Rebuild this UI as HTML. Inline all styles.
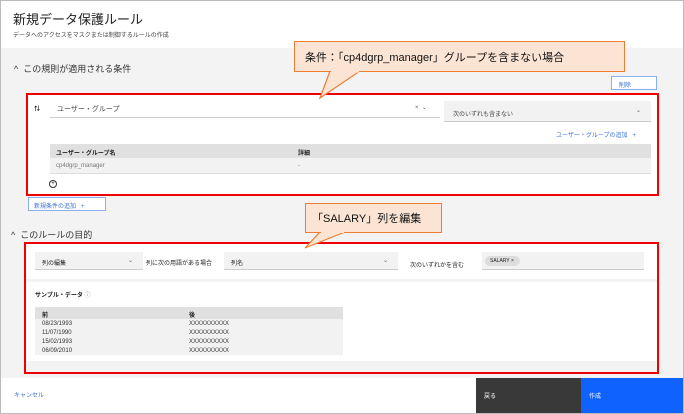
<!DOCTYPE html>
<html><head><meta charset="utf-8"><style>
*{box-sizing:border-box;margin:0;padding:0}
body{width:684px;height:414px;overflow:hidden;font-family:"Liberation Sans","Noto Sans CJK JP",sans-serif;background:#fff;position:relative;color:#222}
.a{position:absolute}
.s{font-size:6px;color:#333}
</style></head><body>
<div class="a" style="left:0;top:0;width:684px;height:414px;border:1px solid #bbb;background:#f3f3f3"></div>
<div class="a" style="left:1px;top:1px;width:682px;height:47px;background:#fff"></div>
<div class="a" style="left:13px;top:9px;font-size:13px;color:#222">新規データ保護ルール</div>
<div class="a" style="left:13px;top:30px;font-size:6px;color:#444">データへのアクセスをマスクまたは制御するルールの作成</div>
<div class="a" style="left:14px;top:62px;font-size:9px;color:#333">^&nbsp;&nbsp;この規則が適用される条件</div>
<div class="a" style="left:611px;top:76px;width:46px;height:14px;border:1px solid #8ab0f0;background:#fff;font-size:6px;color:#3b6fd8;padding:3px 0 0 7px">削除</div>
<!-- box1 -->
<div class="a" style="left:26px;top:93px;width:633px;height:103px;border:2px solid #e00;background:#fff"></div>
<div class="a" style="left:34px;top:104px;font-size:6px;font-weight:bold">⇅</div>
<div class="a" style="left:57px;top:104px;font-size:7px;color:#444">ユーザー・グループ</div>
<div class="a" style="left:50px;top:117px;width:390px;height:1px;background:#ccc"></div>
<div class="a" style="left:415px;top:104px;font-size:6px;color:#666">×&nbsp;&nbsp;⌄</div>
<div class="a" style="left:444px;top:101px;width:207px;height:21px;background:#f2f2f2;border-bottom:1px solid #ccc"></div>
<div class="a" style="left:453px;top:109px;font-size:6px;color:#444">次のいずれも含まない</div>
<div class="a" style="left:636px;top:107px;font-size:6px;color:#666">⌄</div>
<div class="a" style="left:556px;top:130px;font-size:6px;color:#3b6fd8">ユーザー・グループの追加&nbsp;&nbsp;&nbsp;+</div>
<div class="a" style="left:50px;top:144px;width:601px;height:14px;background:#e0e0e0"></div>
<div class="a" style="left:56px;top:148px;font-size:6px;font-weight:bold">ユーザー・グループ名</div>
<div class="a" style="left:298px;top:148px;font-size:6px;font-weight:bold">詳細</div>
<div class="a" style="left:50px;top:158px;width:601px;height:16px;background:#f2f2f2;border-bottom:1px solid #ddd"></div>
<div class="a" style="left:56px;top:163px;font-size:6px;color:#777">cp4dgrp_manager</div>
<div class="a" style="left:298px;top:163px;font-size:6px;color:#777">-</div>
<div class="a" style="left:49px;top:180px;width:8px;height:8px;border:1px solid #333;border-radius:50%;font-size:6px;line-height:6px;text-align:center">+</div>
<div class="a" style="left:28px;top:197px;width:78px;height:14px;border:1px solid #8ab0f0;background:#fff;font-size:6px;color:#3b6fd8;padding:3px 0 0 5px">新規条件の追加&nbsp;&nbsp;&nbsp;+</div>
<div class="a" style="left:11px;top:228px;font-size:9px;color:#333">^&nbsp;&nbsp;このルールの目的</div>
<!-- box2 -->
<div class="a" style="left:24px;top:242px;width:635px;height:132px;border:2px solid #e00;background:#f3f3f3"></div>
<div class="a" style="left:26px;top:244px;width:631px;height:35px;background:#fff"></div>
<div class="a" style="left:26px;top:282px;width:631px;height:79px;background:#fff"></div>
<div class="a" style="left:35px;top:252px;width:108px;height:18px;background:#f2f2f2;border-bottom:1px solid #ccc"></div>
<div class="a" style="left:42px;top:258px;font-size:6px">列の編集</div>
<div class="a" style="left:128px;top:257px;font-size:6px;color:#666">⌄</div>
<div class="a" style="left:146px;top:258px;font-size:6px">列に次の用語がある場合</div>
<div class="a" style="left:224px;top:252px;width:174px;height:18px;background:#f2f2f2;border-bottom:1px solid #ccc"></div>
<div class="a" style="left:231px;top:258px;font-size:6px">列名</div>
<div class="a" style="left:383px;top:257px;font-size:6px;color:#666">⌄</div>
<div class="a" style="left:410px;top:260px;font-size:6px">次のいずれかを含む</div>
<div class="a" style="left:482px;top:252px;width:162px;height:18px;background:#f2f2f2;border-bottom:1px solid #ccc"></div>
<div class="a" style="left:485px;top:256px;width:35px;height:10px;background:#ddd;border-radius:5px;font-size:5px;padding:2px 0 0 5px">SALARY ×</div>
<div class="a" style="left:35px;top:290px;font-size:6px;font-weight:bold">サンプル・データ <span style="font-weight:normal;color:#888">ⓘ</span></div>
<div class="a" style="left:35px;top:307px;width:308px;height:48px;background:#f2f2f2"></div>
<div class="a" style="left:35px;top:307px;width:308px;height:12px;background:#e0e0e0"></div>
<div class="a" style="left:42px;top:310px;font-size:6px;font-weight:bold">前</div>
<div class="a" style="left:189px;top:310px;font-size:6px;font-weight:bold">後</div>
<div class="a" style="left:42px;top:320px;font-size:6px;line-height:9px;color:#333">08/23/1993<br>11/07/1990<br>15/02/1993<br>06/09/2010</div>
<div class="a" style="left:189px;top:320px;font-size:6px;line-height:9px;color:#333">XXXXXXXXXX<br>XXXXXXXXXX<br>XXXXXXXXXX<br>XXXXXXXXXX</div>
<!-- bottom -->
<div class="a" style="left:1px;top:378px;width:682px;height:35px;background:#fff"></div>
<div class="a" style="left:14px;top:390px;font-size:6px;color:#3b6fd8">キャンセル</div>
<div class="a" style="left:476px;top:378px;width:105px;height:35px;background:#393939;color:#fff;font-size:6px;padding:13px 0 0 8px">戻る</div>
<div class="a" style="left:581px;top:378px;width:102px;height:35px;background:#0f62fe;color:#fff;font-size:6px;padding:13px 0 0 8px">作成</div>
<!-- callouts -->
<svg class="a" style="left:0;top:0" width="684" height="414">
<polygon points="330,71 360,71 320,98" fill="#fce4d4" stroke="#ed7d31" stroke-width="1.2"/>
<polygon points="320,232 345,232 305,248" fill="#fce4d4" stroke="#ed7d31" stroke-width="1.2"/>
</svg>
<div class="a" style="left:294px;top:41px;width:331px;height:31px;background:#fce4d4;border:1.5px solid #ed7d31;font-size:11px;color:#111;padding:7px 0 0 10px">条件：「cp4dgrp_manager」グループを含まない場合</div>
<div class="a" style="left:305px;top:203px;width:137px;height:30px;background:#fce4d4;border:1.5px solid #ed7d31;font-size:11px;color:#111;padding:6px 0 0 6px">「SALARY」列を編集</div>
<svg class="a" style="left:0;top:0" width="684" height="414">
<line x1="331" y1="71.5" x2="359" y2="71.5" stroke="#fce4d4" stroke-width="2"/>
<line x1="321" y1="232" x2="344" y2="232" stroke="#fce4d4" stroke-width="2"/>
</svg>
</body></html>
